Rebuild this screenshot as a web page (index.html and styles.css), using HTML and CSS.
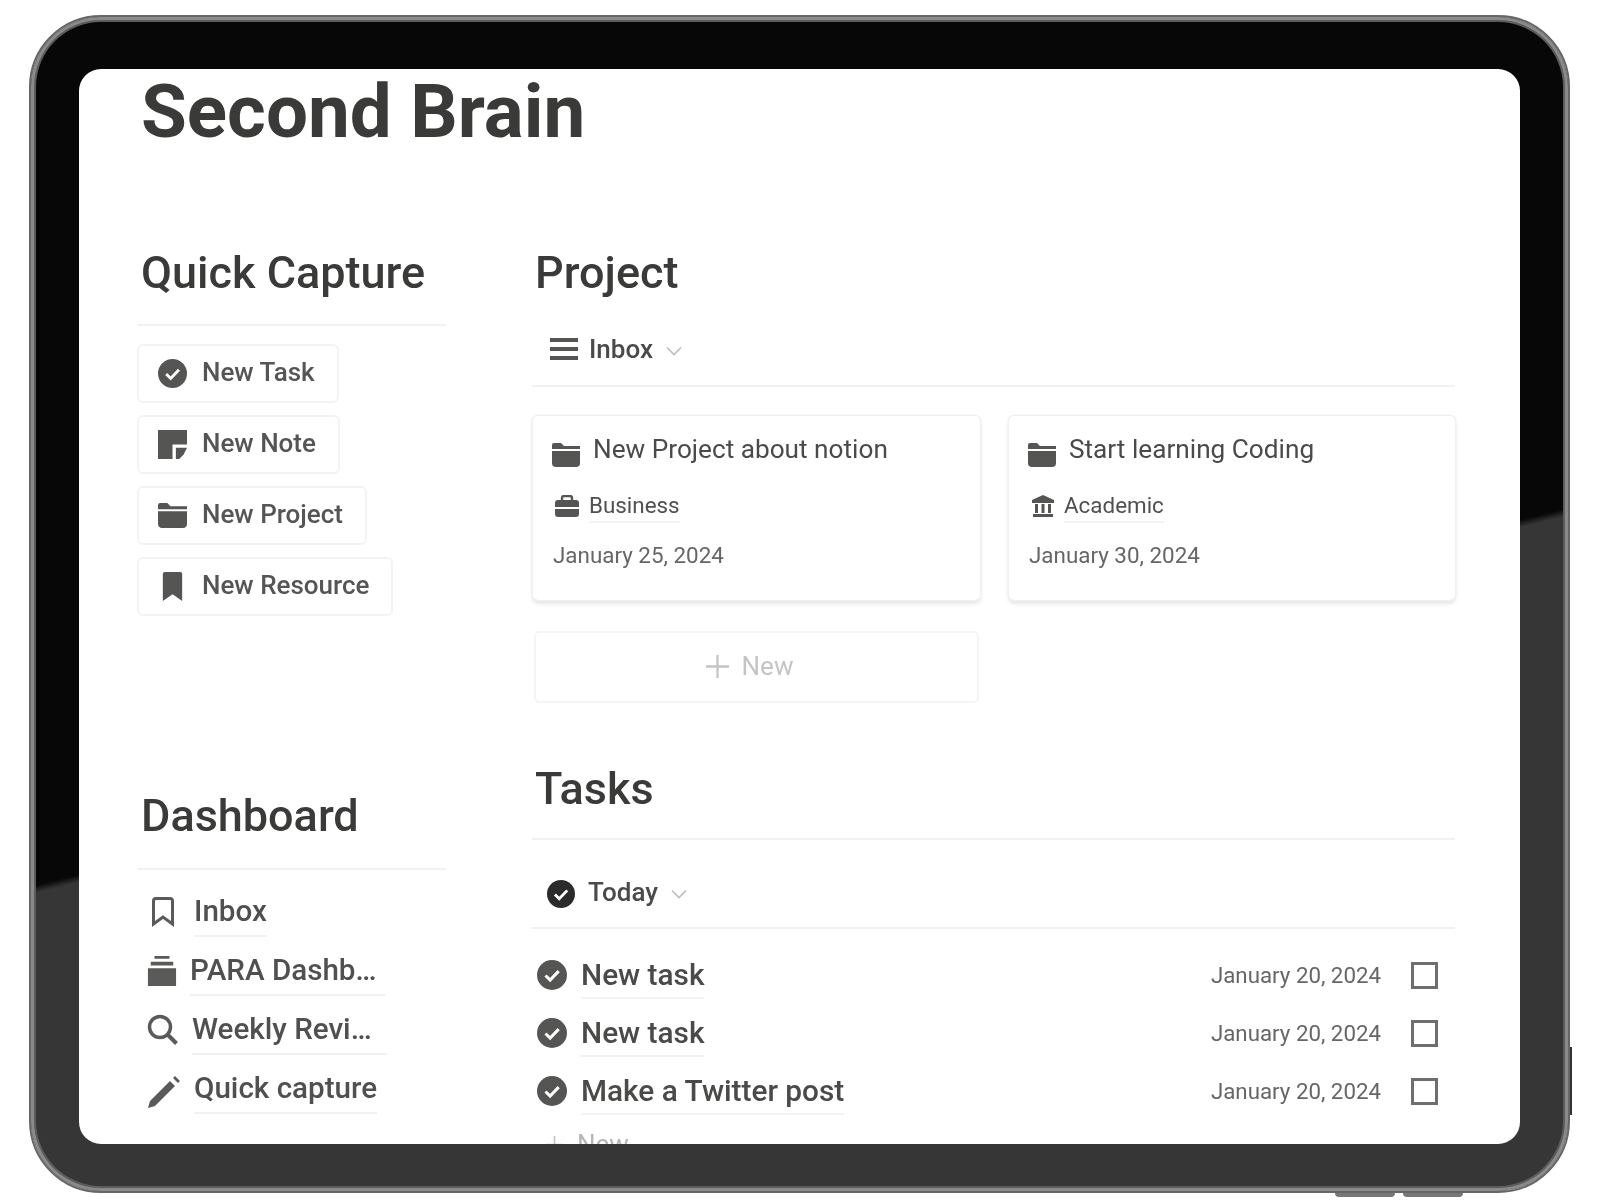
FILE: index.html
```html
<!DOCTYPE html>
<html lang="en">
<head>
    <meta charset="UTF-8">
    <meta name="viewport" content="width=device-width, initial-scale=1.0">
    <title>Second Brain</title>
    <link rel="stylesheet" href="styles.css">
</head>
<body>
    <svg class="defs" width="0" height="0">
        <symbol id="i-check" viewBox="0 0 30 30">
            <circle cx="15" cy="15" r="15" fill="currentColor"/>
            <path d="M8.5 15.5l4.6 4.6 8.6-9" fill="none" stroke="#fff" stroke-width="3"/>
        </symbol>
        <symbol id="i-note" viewBox="0 0 26 26">
            <path d="M0 0h26v13H13v13H0z" fill="currentColor"/>
            <path d="M16 16h10l-3 6-4 4h-3z" fill="currentColor"/>
        </symbol>
        <symbol id="i-folder" viewBox="0 0 28 24">
            <path d="M0 2q0-2 2-2h7l3 3h16v3H0z" fill="currentColor"/>
            <path d="M0 8h28v12q0 4-4 4H4q-4 0-4-4z" fill="currentColor"/>
        </symbol>
        <symbol id="i-bookmark" viewBox="0 0 22 30">
            <path d="M1 2q0-2 2-2h16q2 0 2 2v28l-10-7-10 7z" fill="currentColor"/>
        </symbol>
        <symbol id="i-bookmark-o" viewBox="0 0 24 30">
            <path d="M2.500 4q0-2.500 2.500-2.500h14q2.500 0 2.500 2.500v23l-9.500-7-9.500 7z" fill="none" stroke="currentColor" stroke-width="3"/>
        </symbol>
        <symbol id="i-stack" viewBox="0 0 30 32">
            <path d="M7 0h16v3H7zM3 6h24v4H3zM0 13h30v19H0z" fill="currentColor"/>
        </symbol>
        <symbol id="i-search" viewBox="0 0 32 32">
            <circle cx="13" cy="13" r="10.500" fill="none" stroke="currentColor" stroke-width="3.500"/>
            <path d="M20.500 20.500l9 9" stroke="currentColor" stroke-width="4"/>
        </symbol>
        <symbol id="i-pencil" viewBox="0 0 32 32">
            <path d="M0 32l2-7L22 5l5 5L7 30zM25 2l2-2 5 5-2 2z" fill="currentColor"/>
        </symbol>
        <symbol id="i-list" viewBox="0 0 28 24">
            <path d="M0 1h28v4H0zM0 10h28v4H0zM0 19h28v4H0z" fill="currentColor"/>
        </symbol>
        <symbol id="i-chevron" viewBox="0 0 16 10">
            <path d="M1 1.500l7 7 7-7" fill="none" stroke="currentColor" stroke-width="1.600"/>
        </symbol>
        <symbol id="i-plus" viewBox="0 0 24 24">
            <path d="M12 0v24M0 12h24" stroke="currentColor" stroke-width="2.400"/>
        </symbol>
        <symbol id="i-case" viewBox="0 0 24 22">
            <path d="M7 6V3q0-2 2-2h6q2 0 2 2v3" fill="none" stroke="currentColor" stroke-width="2.400"/>
            <path d="M0 8q0-3 3-3h18q3 0 3 3v4H0zM0 14h24v5q0 3-3 3H3q-3 0-3-3z" fill="currentColor"/>
        </symbol>
        <symbol id="i-bank" viewBox="0 0 22 22">
            <path d="M11 0l11 5v3H0V5zM3 9h3v9H3zM9.500 9h3v9h-3zM16 9h3v9h-3zM1 19h20v3H1z" fill="currentColor"/>
        </symbol>
    </svg>

    <div class="tablet">
        <div class="side-key"></div>
        <div class="bottom-keys"><span></span><span></span></div>
        <div class="screen">
            <h1 class="title">Second Brain</h1>
            <div class="columns">
                <div class="col-left">
                    <h2 class="heading ruled">Quick Capture</h2>
                    <div class="buttons">
                        <a class="btn"><svg class="btn-icon"><use href="#i-check"/></svg><span class="btn-label">New Task</span></a>
                        <a class="btn"><svg class="btn-icon"><use href="#i-note"/></svg><span class="btn-label">New Note</span></a>
                        <a class="btn"><svg class="btn-icon"><use href="#i-folder"/></svg><span class="btn-label">New Project</span></a>
                        <a class="btn"><svg class="btn-icon"><use href="#i-bookmark"/></svg><span class="btn-label">New Resource</span></a>
                    </div>

                    <h2 class="heading ruled dash-heading">Dashboard</h2>
                    <ul class="dash">
                        <li><svg class="dash-icon bookmark"><use href="#i-bookmark-o"/></svg><span class="link">Inbox</span></li>
                        <li><svg class="dash-icon stack"><use href="#i-stack"/></svg><span class="link wide">PARA Dashb…</span></li>
                        <li><svg class="dash-icon search"><use href="#i-search"/></svg><span class="link wide">Weekly Revi…</span></li>
                        <li><svg class="dash-icon pencil"><use href="#i-pencil"/></svg><span class="link">Quick capture</span></li>
                    </ul>
                </div>

                <div class="col-right">
                    <h2 class="heading">Project</h2>
                    <div class="tab tab-project">
                        <svg class="tab-icon list"><use href="#i-list"/></svg>
                        <span class="tab-name">Inbox</span>
                        <svg class="chevron"><use href="#i-chevron"/></svg>
                    </div>
                    <div class="cards">
                        <div class="card">
                            <div class="card-title"><svg class="folder"><use href="#i-folder"/></svg>New Project about notion</div>
                            <div class="card-tag"><svg class="tag-icon"><use href="#i-case"/></svg><span class="tag-name">Business</span></div>
                            <div class="card-date">January 25, 2024</div>
                        </div>
                        <div class="card">
                            <div class="card-title"><svg class="folder"><use href="#i-folder"/></svg>Start learning Coding</div>
                            <div class="card-tag academic"><svg class="tag-icon"><use href="#i-bank"/></svg><span class="tag-name">Academic</span></div>
                            <div class="card-date">January 30, 2024</div>
                        </div>
                    </div>
                    <div class="new-card"><svg class="plus"><use href="#i-plus"/></svg>New</div>

                    <h2 class="heading ruled tasks-heading">Tasks</h2>
                    <div class="tab tab-tasks">
                        <svg class="tab-icon today"><use href="#i-check"/></svg>
                        <span class="tab-name">Today</span>
                        <svg class="chevron"><use href="#i-chevron"/></svg>
                    </div>
                    <div class="tasks">
                        <div class="task">
                            <svg class="task-icon"><use href="#i-check"/></svg>
                            <span class="task-name">New task</span>
                            <span class="task-date">January 20, 2024</span>
                            <span class="checkbox"></span>
                        </div>
                        <div class="task">
                            <svg class="task-icon"><use href="#i-check"/></svg>
                            <span class="task-name">New task</span>
                            <span class="task-date">January 20, 2024</span>
                            <span class="checkbox"></span>
                        </div>
                        <div class="task">
                            <svg class="task-icon"><use href="#i-check"/></svg>
                            <span class="task-name">Make a Twitter post</span>
                            <span class="task-date">January 20, 2024</span>
                            <span class="checkbox"></span>
                        </div>
                        <div class="task-new"><svg class="plus small"><use href="#i-plus"/></svg>New</div>
                    </div>
                </div>
            </div>
        </div>
    </div>
</body>
</html>
```

FILE: styles.css
```css
* {
    box-sizing: border-box;
}
html, body {
    margin: 0;
    height: 1200px;
    overflow: hidden;
}
body {
    padding: 15px 0 0 29px;
    background: #fff;
    font-family: Roboto, "Liberation Sans", sans-serif;
    color: #454543;
}
.defs {
    position: absolute;
}
svg {
    display: block;
    flex: none;
}

/* device frame */
.tablet {
    position: relative;
    width: 1541px;
    height: 1178px;
    padding: 52px 48px 47px;
    border: 2px solid #666;
    border-radius: 72px;
    background: linear-gradient(-13.83deg, #363636 43.5%, #070707 44%) padding-box;
    box-shadow: inset 0 0 0 3px #8a8a8a, inset 0 0 0 5px #5c5c5c;
}
.side-key {
    position: absolute;
    right: -4px;
    top: 1030px;
    width: 2px;
    height: 68px;
    background: #333;
}
.bottom-keys {
    position: absolute;
    left: 1304px;
    bottom: -6px;
    display: flex;
    gap: 8px;
}
.bottom-keys span {
    width: 60px;
    height: 4px;
    border-radius: 0 0 5px 5px;
    background: #777;
}
.screen {
    height: 1075px;
    padding-left: 58px;
    overflow: hidden;
    border-radius: 22px;
    background: #fff;
    filter: blur(0.5px);
}

.title {
    margin: 0 0 87px 4px;
    height: 86px;
    font-size: 74.5px;
    line-height: 86px;
    font-weight: 700;
    color: #3a3a38;
}
.columns {
    display: grid;
    grid-template-columns: 309px 923px;
    gap: 86px;
}
.heading {
    margin: 0;
    height: 60px;
    padding: 1px 0 0 4px;
    font-size: 45px;
    line-height: 60px;
    font-weight: 500;
    color: #3a3a38;
}
.heading.ruled {
    height: 84px;
    border-bottom: 2px solid #f1f1ef;
}
.col-right .heading {
    padding-left: 3px;
}

/* quick capture */
.buttons {
    display: flex;
    flex-direction: column;
    align-items: flex-start;
    gap: 12px;
    margin-top: 18px;
}
.btn {
    display: flex;
    align-items: center;
    height: 59px;
    padding: 0 22px 0 19px;
    border: 2px solid #f3f3f1;
    border-radius: 6px;
    font-size: 26px;
    font-weight: 500;
    color: #555553;
}
.btn-icon {
    width: 29px;
    height: 29px;
    margin-right: 15px;
    color: #555553;
}
.btn-label {
    margin-bottom: 3px;
}

/* dashboard */
.heading.dash-heading {
    margin-top: 170px;
    padding-top: 0;
}
.dash {
    list-style: none;
    margin: 12px 0 0;
    padding: 0 0 0 14px;
}
.dash li {
    display: flex;
    align-items: center;
    height: 59px;
}
.dash-icon {
    width: 30px;
    height: 30px;
    color: #5a5a58;
}
.dash-icon.bookmark {
    width: 24px;
    margin-right: 19px;
}
.dash-icon.stack {
    margin: 0 13px 0 -4px;
}
.dash-icon.search {
    width: 32px;
    height: 32px;
    margin: 0 13px 0 -4px;
}
.dash-icon.pencil {
    width: 32px;
    height: 32px;
    margin: 6px 14px 0 -3px;
}
.link {
    height: 50px;
    padding-top: 4px;
    border-bottom: 2px solid #f1f1ef;
    font-size: 29.6px;
    line-height: 40px;
    font-weight: 500;
    color: #505050;
    white-space: nowrap;
}
.link.wide {
    width: 195px;
}

/* views */
.tab {
    display: flex;
    align-items: center;
    border-bottom: 2px solid #f1f1ef;
}
.tab-project {
    height: 85px;
    padding: 16px 0 5px 18px;
}
.tab-tasks {
    height: 89px;
    padding: 20px 0 3px 15px;
}
.tab-icon.list {
    width: 28px;
    height: 24px;
    margin-right: 11px;
    color: #555553;
}
.tab-icon.today {
    width: 28px;
    height: 28px;
    margin: 4px 13px 0 0;
    color: #2b2b2b;
}
.tab-name {
    font-size: 26px;
    font-weight: 500;
    color: #4a4a48;
}
.chevron {
    width: 16px;
    height: 10px;
    margin: 4px 0 0 13px;
    color: #bdbdbb;
}

/* project cards */
.cards {
    display: grid;
    grid-template-columns: 447px 446px;
    gap: 29px;
    margin-top: 29px;
    padding-left: 1px;
}
.card {
    height: 184px;
    padding: 16px 20px 16px 19px;
    border-radius: 5px;
    box-shadow: 0 0 0 1.500px #f0f0ee, 0 3px 5px rgba(0, 0, 0, .14);
}
.card-title {
    display: flex;
    align-items: flex-start;
    height: 40px;
    font-size: 26.2px;
    line-height: 34px;
    color: #4a4a48;
}
.folder {
    width: 28px;
    height: 24px;
    margin: 11px 13px 0 0;
    color: #555553;
}
.card-tag {
    display: flex;
    align-items: center;
    margin: 17px 0 0 3px;
    height: 34px;
}
.card-tag.academic {
    margin-left: 4px;
}
.tag-icon {
    width: 24px;
    height: 22px;
    margin-right: 10px;
    color: #555553;
}
.academic .tag-icon {
    width: 22px;
    margin-right: 10px;
}
.tag-name {
    height: 34px;
    border-bottom: 2px solid #f3f3f1;
    font-size: 22.4px;
    line-height: 32px;
    color: #505050;
}
.card-date {
    margin: 17px 0 0 1px;
    font-size: 22.4px;
    line-height: 30px;
    color: #666664;
}
.new-card {
    display: flex;
    align-items: center;
    justify-content: center;
    width: 445px;
    height: 72px;
    margin: 31px 0 0 2px;
    padding: 0 14px 2px 0;
    border: 2px solid #f5f5f3;
    border-radius: 5px;
    font-size: 26px;
    color: #c4c4c2;
}
.plus {
    width: 23px;
    height: 23px;
    margin-right: 13px;
    color: #c4c4c2;
}

/* tasks */
.heading.tasks-heading {
    height: 82px;
    margin-top: 55px;
}
.tasks {
    margin-top: 17px;
}
.task {
    display: flex;
    align-items: center;
    height: 58px;
    padding: 0 17px 0 5px;
}
.task-icon {
    width: 30px;
    height: 30px;
    margin-right: 14px;
    color: #555553;
}
.task-name {
    height: 48px;
    border-bottom: 2px solid #f3f3f1;
    font-size: 29.8px;
    line-height: 48px;
    font-weight: 500;
    color: #4a4a48;
}
.task-date {
    margin-left: auto;
    margin-right: 30px;
    font-size: 22.3px;
    color: #666664;
}
.checkbox {
    width: 27px;
    height: 27px;
    border: 3px solid #6e6e6e;
}
.task-new {
    display: flex;
    align-items: center;
    height: 48px;
    padding-left: 14px;
    font-size: 26px;
    color: #b5b5b3;
}
.plus.small {
    width: 17px;
    height: 17px;
    margin-right: 14px;
}
```
